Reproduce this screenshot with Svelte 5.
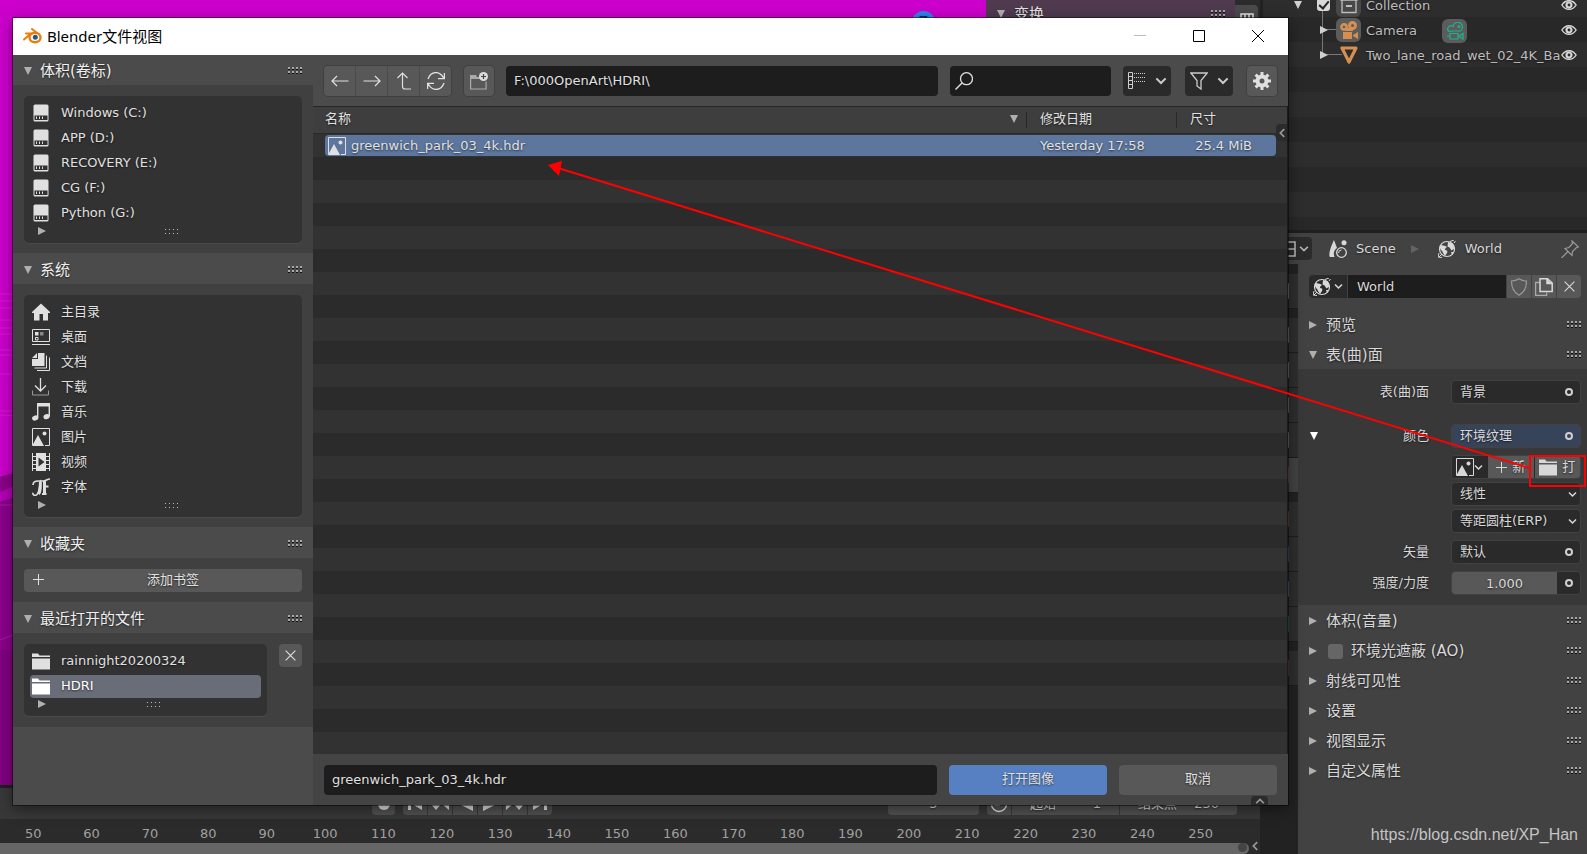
<script lang="ts">
	type Item = { icon: string; label: string };

	const drives: Item[] = [
		{ icon: 'drive', label: 'Windows (C:)' },
		{ icon: 'drive', label: 'APP (D:)' },
		{ icon: 'drive', label: 'RECOVERY (E:)' },
		{ icon: 'drive', label: 'CG (F:)' },
		{ icon: 'drive', label: 'Python (G:)' }
	];

	const system: Item[] = [
		{ icon: 'home', label: '主目录' },
		{ icon: 'desktop', label: '桌面' },
		{ icon: 'docs', label: '文档' },
		{ icon: 'download', label: '下载' },
		{ icon: 'music', label: '音乐' },
		{ icon: 'image', label: '图片' },
		{ icon: 'video', label: '视频' },
		{ icon: 'font', label: '字体' }
	];

	const recent: Item[] = [
		{ icon: 'folder', label: 'rainnight20200324' },
		{ icon: 'folder', label: 'HDRI' }
	];

	const files = [{ name: 'greenwich_park_03_4k.hdr', date: 'Yesterday 17:58', size: '25.4 MiB' }];

	const frames = Array.from({ length: 21 }, (_, i) => 50 + i * 10);

	const tabs = [
		{ color: '#b5b5b5', gap: false },
		{ color: '#b5b5b5', gap: true },
		{ color: '#b5b5b5', gap: false },
		{ color: '#b5b5b5', gap: false },
		{ color: '#b5b5b5', gap: false },
		{ color: '#c9606c', gap: false },
		{ color: '#a87548', gap: true },
		{ color: '#5480b5', gap: false },
		{ color: '#5c94d6', gap: false },
		{ color: '#1fa57f', gap: false },
		{ color: '#a85a62', gap: true }
	];

	let selectedRecent = $state('HDRI');
	let fileName = $state('greenwich_park_03_4k.hdr');
	let path = $state('F:\\000OpenArt\\HDRI\\');
	let search = $state('');
	let worldName = $state('World');
	let strength = $state('1.000');

	// every icon is drawn on an 18x18 grid
	const icons: Record<string, string> = {
		drive:
			'<path fill="currentColor" fill-rule="evenodd" d="M3 .5h12a1.5 1.5 0 0 1 1.500 1.500v14a1.500 1.500 0 0 1-1.500 1.500h-12a1.500 1.500 0 0 1-1.500-1.500v-14a1.500 1.500 0 0 1 1.500-1.500zM2.500 11.500v4.500h13v-4.500z"/><path stroke="currentColor" d="M4.500 12.500v2.500M7.500 12.500v2.500M10.500 12.500v2.500"/>',
		home: '<path fill="currentColor" d="M9 .5 18 9v1h-2v7.500h-5V11H7.500v6.500H2V10H0V9z"/>',
		desktop:
			'<path fill="none" stroke="currentColor" d="M.5 1.500h17v12H.5zM0 16.500h18"/><path fill="currentColor" d="M3 4h3.500v3.500H3z"/><path fill="#888" d="M8 4h3.500v3.500H8z"/><path fill="none" stroke="currentColor" d="M3.500 9.500h2.500v2.500H3.500z"/>',
		docs: '<path fill="currentColor" d="M6 0h6.500v13H0V6h6zM5 0v5H0z"/><path fill="none" stroke="currentColor" d="M14.500 2.500v12.500H2.500M17.500 4.500v13H5"/>',
		download:
			'<path fill="none" stroke="currentColor" stroke-width="1.300" d="M8.500 0v13M3 7.500 8.500 13 14 7.500"/><path fill="none" stroke="#999" d="M.5 12.500v4.500h16v-4.500"/>',
		music:
			'<path fill="currentColor" d="M5 0h13v3.500H5z"/><path fill="none" stroke="currentColor" stroke-width="1.400" d="M5.700 1v13.500M17.300 1v12"/><ellipse fill="currentColor" cx="3.200" cy="15" rx="3.200" ry="2.500" transform="rotate(-20 3.200 15)"/><ellipse fill="currentColor" cx="14.600" cy="13.600" rx="3.200" ry="2.500" transform="rotate(-20 14.600 13.600)"/>',
		image:
			'<path fill="none" stroke="currentColor" d="M.5 17V.5h17v17H13"/><path fill="currentColor" d="M0 18 6 7l6 11z"/><circle fill="currentColor" cx="12.500" cy="5.500" r="2"/>',
		video:
			'<path fill="currentColor" fill-rule="evenodd" d="M4 0h10v18H4zM6.500 4.500v9l6-4.500z"/><path fill="none" stroke="currentColor" d="M.5 0v18M17.500 0v18M0 3.500h4M0 7.500h4M0 11.500h4M0 15.500h4M14 3.500h4M14 7.500h4M14 11.500h4M14 15.500h4"/>',
		font: '<path fill="none" stroke="currentColor" stroke-width="1.600" d="M1 7c0-3 2-4 5-4h5c3 0 4-2 7-2M9 2c-2 4-1 14-5 15.200-2 .5-3.500-.5-3-2.500"/><path fill="none" stroke="currentColor" stroke-width="3" d="M8.500 4c-.5 5 .5 9-2 12M12.500 3v13"/><path fill="none" stroke="currentColor" stroke-width="2" d="M12 8.500h4.500M10 16h4.500"/>',
		folder: '<path fill="currentColor" d="M0 1.500h6l1.500 2H18V5H0zM0 6.500h18v11H0z"/>',
		back: '<path fill="none" stroke="currentColor" stroke-width="1.200" d="M17.500 9H1M6 4 1 9l5 5"/>',
		forward: '<path fill="none" stroke="currentColor" stroke-width="1.200" d="M.5 9H17M12 4l5 5-5 5"/>',
		parent:
			'<path fill="none" stroke="currentColor" stroke-width="1.200" d="M2.500 6 7.500 1l5 5M7.500 1v13.500q0 2.500 2.500 2.500h6"/>',
		refresh:
			'<path fill="none" stroke="currentColor" stroke-width="1.300" d="M1 7C4-1.500 13-1.500 17 6.500M17.400 1v5.600H11M17 11C14 19.500 5 19.500 1 11.500M.6 17v-5.600H7"/>',
		newfolder:
			'<path fill="none" stroke="#aaa" stroke-width="1.200" d="M.6 5v12h15.500V9.500"/><path fill="#aaa" d="M0 3h6l1 2h4v2H0z"/><circle fill="#ddd" cx="13.500" cy="4.500" r="4.500"/><path stroke="#444" stroke-width="1.200" d="M13.500 2v5M11 4.500h5"/>',
		search:
			'<circle fill="none" stroke="currentColor" stroke-width="1.300" cx="11.500" cy="6.700" r="6"/><path fill="none" stroke="currentColor" stroke-width="1.400" d="M7 11 .5 17.500"/>',
		display:
			'<path fill="none" stroke="currentColor" d="M.5 .5h4v16H.5zM.5 4.500h4M.5 8.500h4M.5 12.500h4"/><path fill="none" stroke="currentColor" stroke-dasharray="1 1" d="M6 1.500h12M6 5.500h12M6 9.500h12"/>',
		filter: '<path fill="none" stroke="currentColor" stroke-width="1.300" d="M.8 1h16.400L11 8.500V17l-4-3V8.500z"/>',
		gear: '<circle fill="none" stroke="currentColor" stroke-width="4" cx="9" cy="9" r="4.500"/><path stroke="currentColor" stroke-width="3" d="M9 0v4M9 14v4M0 9h4M14 9h4M2.600 2.600l3 3M12.400 12.400l3 3M15.400 2.600l-3 3M2.600 15.400l3-3"/>',
		chevron: '<path fill="none" stroke="currentColor" stroke-width="3" d="m2 5 7 7 7-7"/>',
		plus: '<path fill="none" stroke="currentColor" stroke-width="1.700" d="M9 0v18M0 9h18"/>',
		close: '<path fill="none" stroke="currentColor" stroke-width="1.800" d="m1 1 16 16M17 1 1 17"/>',
		eye: '<path fill="none" stroke="currentColor" stroke-width="1.600" d="M1 9c4-6.500 12-6.500 16 0-4 6.500-12 6.500-16 0z"/><circle fill="none" stroke="currentColor" stroke-width="2.400" cx="9" cy="9" r="2.800"/>',
		camera:
			'<g fill="none" stroke="currentColor"><circle cx="4" cy="6" r="2.600" stroke-width="2.600"/><circle cx="12.500" cy="4.500" r="3" stroke-width="3"/></g><path fill="currentColor" d="M3 11h9v7H3zM13 14l5-3v7l-5-3zM6 7h7v3H6z"/>',
		cameradata:
			'<g fill="none" stroke="currentColor" stroke-width="1.200"><path d="M3 9.500a3 3 0 1 1 4-5 4.800 4.800 0 1 1 7.500 4.500h-8z"/><path d="M4 11.500h8v5.500H4zM13 14.300l4-2.800v5.500zM4 14H1"/><circle cx="13" cy="4.500" r="1"/></g>',
		mesh: '<path fill="none" stroke="currentColor" stroke-width="3.200" stroke-linejoin="round" d="M2 2h14L9 16z"/>',
		collection:
			'<path fill="none" stroke="currentColor" stroke-width="1.300" d="M1 0h16v4H1zM2 4v12.500h14V4"/><path fill="currentColor" d="M6 9h6v2H6z"/>',
		scene:
			'<path fill="currentColor" d="M5 0 8 8c-3 2-4 5-2.500 9H1c-2-2 1-11 4-17z"/><circle fill="currentColor" cx="15" cy="2.800" r="2.500"/><circle fill="none" stroke="currentColor" stroke-width="1.300" cx="12.500" cy="12.500" r="4.800"/><path fill="none" stroke="currentColor" d="M9.500 13a3 3 0 0 1 3-3"/>',
		world:
			'<circle fill="none" stroke="currentColor" stroke-width="1.200" cx="9" cy="9" r="7.500"/><path fill="currentColor" d="M2 5c3 0 6 1 7 2-1 1-2 1-2 3 2 0 3 1 2 3l-2 3-2-3c0-2-3-3-3-5zM10 2l5 1.500 1.500 5-3 2-2-3-2-1zM13 12h3l-2 3z"/><path fill="none" stroke="currentColor" d="M12 1.500 16 0M1 13l-1 4 4 .5M16 3l1.500-2M1 17l3-3"/>',
		pin: '<path fill="none" stroke="currentColor" stroke-width="1.200" d="m11 1 6.500 6-2 .5-4 4-.5 4-7-7 4-1 3.500-4zM7 11.500.5 18"/>',
		shield: '<path fill="none" stroke="currentColor" stroke-width="1.200" d="M9 .8c2.500 1.700 5 2.200 7.500 2.200 0 6-1.500 11-7.500 14.200C3 14 1.500 9 1.500 3 4 3 6.500 2.500 9 .8z"/>',
		copy: '<path fill="none" stroke="#aaa" stroke-width="1.300" d="M4.500 4.500H.6v13h11v-3"/><path fill="none" stroke="currentColor" stroke-width="1.500" d="M5 .8h7.500L17.200 5v8.500H5zM12 1v4.500h5"/><path fill="currentColor" d="M12 1v5h5z"/>',
		clock: '<circle fill="none" stroke="currentColor" stroke-width="1.600" cx="9" cy="9" r="7.500"/><path fill="none" stroke="currentColor" stroke-width="1.500" d="M9 3v7H4.500"/>',
		record: '<circle fill="currentColor" cx="9" cy="9" r="6"/>',
		first: '<path fill="currentColor" d="M2 3h3v12H2zM16 3v12L6 9z"/>',
		prevkey: '<path fill="currentColor" d="m5 3 5 6-5 6-5-6zM18 3v12l-7-6z"/>',
		reverse: '<path fill="currentColor" d="M17 1v15L2 8.500z"/>',
		play: '<path fill="currentColor" d="M2 1v15l15-7.500z"/>',
		nextkey: '<path fill="currentColor" d="m13 3 5 6-5 6-5-6zM0 3v12l7-6z"/>',
		last: '<path fill="currentColor" d="M13 3h3v12h-3zM2 3v12l10-6z"/>',
		grid: '<path fill="none" stroke="currentColor" stroke-width="1.500" d="M3 18V9h12v9M7 9v9M11 9v9"/>',
		tab: '<path fill="none" stroke="currentColor" stroke-width="1.600" d="M1 2h15v14H1zM1 9h15"/>'
	};

	const playback = ['first', 'prevkey', 'reverse', 'play', 'nextkey', 'last'];
	const lower = ['射线可见性', '设置', '视图显示', '自定义属性'];
</script>

{#snippet icon(name: string, size = 18)}
	<svg class="icon" width={size} height={size} viewBox="0 0 18 18" aria-hidden="true">
		{@html icons[name]}
	</svg>
{/snippet}

{#snippet triangle(open: boolean)}
	<svg class="icon tri" width="8" height="8" viewBox="0 0 8 8" aria-hidden="true">
		<path fill="currentColor" d={open ? 'M0 0h8L4 8z' : 'M0 0v8l8-4z'} />
	</svg>
{/snippet}

{#snippet grip()}
	<svg class="icon" width="14" height="8" viewBox="0 0 14 8" aria-hidden="true">
		{#each [0, 4, 8, 12] as x}
			<path fill="#a8a8a8" d="M{x} 0h2v2h-2zM{x} 4h2v2h-2z" />
			<path fill="#111" d="M{x} 2h2v1h-2zM{x} 6h2v1h-2z" />
		{/each}
	</svg>
{/snippet}

{#snippet listFoot()}
	<div class="list-foot">
		{@render triangle(false)}
		<svg class="icon" width="13" height="6" viewBox="0 0 13 6" aria-hidden="true">
			<path
				fill="#bbb"
				d="M0 0h1v1h-1zM4 0h1v1h-1zM8 0h1v1h-1zM12 0h1v1h-1zM0 4h1v1h-1zM4 4h1v1h-1zM8 4h1v1h-1zM12 4h1v1h-1z"
			/>
		</svg>
	</div>
{/snippet}

{#snippet placeList(items: Item[])}
	<div class="list">
		{#each items as item}
			<button class="place">{@render icon(item.icon)}{item.label}</button>
		{/each}
		{@render listFoot()}
	</div>
{/snippet}

{#snippet panelHead(title: string, open: boolean)}
	<button class="panel-head">
		{@render triangle(open)}
		<span>{title}</span>
		{@render grip()}
	</button>
{/snippet}

<div class="screen">
	<div class="left-editors">
		<div class="viewport">
			<svg class="streaks" width="40" height="785" viewBox="0 0 40 785" aria-hidden="true">
				<path fill="#8b008b" d="M0 476 40 464v321H0z" />
				<path fill="#b500b5" d="M0 492 40 476v12L0 502z" />
				<path fill="#780078" fill-opacity=".5" d="M0 650h40v135H0z" />
				<path
					fill="none"
					stroke="#e25be2"
					stroke-opacity=".3"
					d="M0 294h40M0 301h40M0 308h40M0 320h40M0 328h40M0 334h40M0 350h40M0 355h40M0 374h40M0 411h40M0 415l40 2M0 476l40-9M0 505h40M0 640l40-16"
				/>
			</svg>
			<span class="gizmo">Z</span>
			<div class="transform">
				{@render triangle(true)}
				<span>变换</span>
				{@render grip()}
			</div>
			<div class="tools"><button aria-label="切换透视">{@render icon('grid')}</button></div>
		</div>
		<div class="timeline">
			<div class="playbar">
				<button class="btn record" aria-label="自动插帧">{@render icon('record')}</button>
				<div class="join">
					{#each playback as name}
						<button class="btn" aria-label={name}>{@render icon(name)}</button>
					{/each}
				</div>
				<div class="frame-num">5</div>
				<div class="join range">
					<button class="btn" aria-label="预览范围">{@render icon('clock')}</button>
					<div class="btn start"><span>起始</span><span>1</span></div>
					<div class="btn end"><span>结束点</span><span>250</span></div>
				</div>
			</div>
			<div class="ruler">
				{#each frames as frame}
					<span>{frame}</span>
				{/each}
			</div>
			<div class="scrollbar"><i></i></div>
			<span class="flap flap-timeline">{@render icon('chevron', 10)}</span>
		</div>
	</div>

	<div class="right-editors">
		<div class="outliner">
			<svg class="tree" width="30" height="55" viewBox="0 0 30 55" aria-hidden="true">
				<path fill="none" stroke="#777" d="M.5 0v54.500H20M0 29.500h14" />
			</svg>
			<div class="row">
				<span class="expand">{@render triangle(true)}</span>
				<input type="checkbox" checked aria-label="Collection" />
				<span class="badge">{@render icon('collection')}</span>
				<span class="name">Collection</span>
				{@render icon('eye', 16)}
			</div>
			<div class="row child">
				<span class="expand">{@render triangle(false)}</span>
				<span class="badge orange">{@render icon('camera')}</span>
				<span class="name">Camera <span class="badge green">{@render icon('cameradata')}</span></span>
				{@render icon('eye', 16)}
			</div>
			<div class="row child">
				<span class="expand">{@render triangle(false)}</span>
				<span class="badge orange plain">{@render icon('mesh')}</span>
				<span class="name">Two_lane_road_wet_02_4K_Ba</span>
				{@render icon('eye', 16)}
			</div>
		</div>

		<div class="properties">
			<div class="crumbs">
				<button class="editor-type" aria-label="编辑器类型">
					{@render icon('tab')}{@render icon('chevron', 10)}
				</button>
				{@render icon('scene')}
				<span>Scene</span>
				<span class="sep">{@render triangle(false)}</span>
				{@render icon('world')}
				<span>World</span>
				<span class="pin">{@render icon('pin')}</span>
			</div>
			<div class="props-main">
				<div class="tabs">
					{#each tabs as tab, i}
						<button
							class:gap={tab.gap}
							class:active={i === 5}
							style="color: {tab.color}"
							aria-label="属性页 {i + 1}"
						>
							{@render icon('tab')}
						</button>
					{/each}
				</div>
				<div class="props">
					<div class="datablock">
						<button class="dark world-pick" aria-label="浏览世界">
							{@render icon('world')}{@render icon('chevron', 9)}
						</button>
						<input type="text" aria-label="世界名称" bind:value={worldName} />
						<button class="btn dim" aria-label="伪用户">{@render icon('shield')}</button>
						<button class="btn" aria-label="复制">{@render icon('copy')}</button>
						<button class="btn" aria-label="断开">{@render icon('close', 11)}</button>
					</div>
					{@render panelHead('预览', false)}
					{@render panelHead('表(曲)面', true)}
					<div class="surface">
						<div class="prop">
							<span class="label">表(曲)面</span>
							<button class="field">背景<i class="socket"></i></button>
						</div>
						<div class="prop wide">
							<span class="open">{@render triangle(true)}</span>
							<span class="label">颜色</span>
							<button class="field blue">环境纹理<i class="socket"></i></button>
						</div>
						<div class="prop">
							<div class="field split">
								<button class="dark" aria-label="浏览图像">
									{@render icon('image')}{@render icon('chevron', 9)}
								</button>
								<button class="btn">{@render icon('plus', 11)}新</button>
								<button class="btn">{@render icon('folder')}打</button>
							</div>
						</div>
						<div class="prop tight">
							<div class="field pick">
								<select aria-label="插值"><option>线性</option></select>
								{@render icon('chevron', 9)}
							</div>
						</div>
						<div class="prop tight">
							<div class="field pick">
								<select aria-label="投影"><option>等距圆柱(ERP)</option></select>
								{@render icon('chevron', 9)}
							</div>
						</div>
						<div class="prop">
							<span class="label">矢量</span>
							<button class="field">默认<i class="socket"></i></button>
						</div>
						<div class="prop">
							<label class="label" for="strength">强度/力度</label>
							<div class="field number">
								<input id="strength" type="text" bind:value={strength} />
								<i class="socket"></i>
							</div>
						</div>
					</div>
					{@render panelHead('体积(音量)', false)}
					<div class="panel-head">
						{@render triangle(false)}
						<label><input type="checkbox" /> 环境光遮蔽 (AO)</label>
						{@render grip()}
					</div>
					{#each lower as title}
						{@render panelHead(title, false)}
					{/each}
				</div>
			</div>
		</div>
	</div>

	<div class="dialog" role="dialog" aria-labelledby="dialog-title">
		<div class="titlebar">
			<svg width="19" height="16" viewBox="0 0 19 16" aria-hidden="true">
				<path
					fill="none"
					stroke="#e87d0d"
					stroke-width="2"
					stroke-linecap="round"
					stroke-linejoin="round"
					d="M9 1l5 4M3 5.500h7M1 11.500l7-6"
				/>
				<ellipse fill="#fff" stroke="#e87d0d" stroke-width="2.400" cx="12" cy="9.500" rx="5.500" ry="4.800" />
				<circle fill="#265787" cx="12.300" cy="9.200" r="2.500" />
			</svg>
			<span id="dialog-title">Blender文件视图</span>
			<button aria-label="最小化">
				<svg width="12" height="12" viewBox="0 0 12 12"><path stroke="#bbb" d="M0 5.500h12" /></svg>
			</button>
			<button aria-label="最大化">
				<svg width="12" height="12" viewBox="0 0 12 12">
					<path fill="none" stroke="#000" d="M.5 .5h11v11H.5z" />
				</svg>
			</button>
			<button aria-label="关闭">
				<svg width="12" height="12" viewBox="0 0 12 12">
					<path stroke="#000" d="m0 0 12 12M12 0 0 12" />
				</svg>
			</button>
		</div>

		<div class="dialog-body">
			<aside>
				<section>
					{@render panelHead('体积(卷标)', true)}
					<div class="panel-body">{@render placeList(drives)}</div>
				</section>
				<section>
					{@render panelHead('系统', true)}
					<div class="panel-body">{@render placeList(system)}</div>
				</section>
				<section>
					{@render panelHead('收藏夹', true)}
					<div class="panel-body">
						<button class="btn bookmark">{@render icon('plus', 11)}<span>添加书签</span></button>
					</div>
				</section>
				<section>
					{@render panelHead('最近打开的文件', true)}
					<div class="panel-body recent">
						<div class="list">
							{#each recent as item}
								<button
									class="place"
									class:selected={selectedRecent === item.label}
									onclick={() => (selectedRecent = item.label)}
								>
									{@render icon(item.icon)}{item.label}
								</button>
							{/each}
							{@render listFoot()}
						</div>
						<button class="btn clear" aria-label="清除">{@render icon('close', 11)}</button>
					</div>
				</section>
			</aside>

			<div class="browser">
				<div class="toolbar">
					<div class="join nav">
						<button class="btn" aria-label="后退">{@render icon('back')}</button>
						<button class="btn" aria-label="前进">{@render icon('forward')}</button>
						<button class="btn" aria-label="上级目录">{@render icon('parent')}</button>
						<button class="btn" aria-label="刷新">{@render icon('refresh')}</button>
					</div>
					<button class="btn square" aria-label="新建文件夹">{@render icon('newfolder')}</button>
					<input class="path" type="text" aria-label="路径" bind:value={path} />
					<label class="search">
						{@render icon('search')}
						<input type="text" aria-label="搜索" bind:value={search} />
					</label>
					<button class="dark menu" aria-label="显示模式">
						{@render icon('display')}{@render icon('chevron', 12)}
					</button>
					<button class="dark menu" aria-label="过滤">
						{@render icon('filter')}{@render icon('chevron', 12)}
					</button>
					<button class="btn square" aria-label="设置">{@render icon('gear')}</button>
				</div>

				<div class="files">
					<table>
						<colgroup><col /><col class="c-date" /><col class="c-size" /></colgroup>
						<thead>
							<tr>
								<th><div class="sorted">名称{@render triangle(true)}</div></th>
								<th><div>修改日期</div></th>
								<th><div>尺寸</div></th>
							</tr>
						</thead>
						<tbody>
							{#each files as file}
								<tr>
									<td><div>{@render icon('image')}{file.name}</div></td>
									<td><div>{file.date}</div></td>
									<td><div>{file.size}</div></td>
								</tr>
							{/each}
						</tbody>
					</table>
					<span class="flap flap-side">{@render icon('chevron', 10)}</span>
				</div>

				<div class="actions">
					<input type="text" aria-label="文件名" bind:value={fileName} />
					<button class="btn primary">打开图像</button>
					<button class="btn">取消</button>
					<span class="flap flap-bottom">{@render icon('chevron', 10)}</span>
				</div>
			</div>
		</div>
	</div>

	<svg class="annotation" viewBox="0 0 1587 854" preserveAspectRatio="none" aria-hidden="true">
		<path fill="none" stroke="#f00" stroke-width="2" d="M1529 468 558 168M1530 456h55v30h-55z" />
		<path fill="#f00" d="m548 165 14-4-3 15z" />
	</svg>
	<a class="watermark" href="https://blog.csdn.net/XP_Han">https://blog.csdn.net/XP_Han</a>
</div>

<style>
	:global(body) {
		margin: 0;
		background: #222;
	}

	.screen {
		position: relative;
		display: flex;
		min-height: 100vh;
		overflow: hidden;
		background: #222;
		color: #e0e0e0;
		font: 13px/20px 'DejaVu Sans', 'Noto Sans CJK SC', sans-serif;
		text-shadow: 0 1px 2px rgba(0, 0, 0, 0.6);
	}

	.screen * {
		box-sizing: border-box;
	}

	button,
	input,
	select {
		margin: 0;
		padding: 0;
		border: 0;
		background: none;
		color: inherit;
		font: inherit;
		text-shadow: inherit;
	}

	.icon {
		display: block;
		flex: none;
	}

	.tri {
		color: #b0b0b0;
	}

	.btn,
	.dark {
		display: flex;
		align-items: center;
		justify-content: center;
		background: #585858;
		border-radius: 4px;
	}

	.dark {
		background: #2a2a2a;
	}

	.join {
		display: flex;
		gap: 1px;
	}

	.join .btn {
		border-radius: 0;
	}

	.join .btn:first-child {
		border-radius: 4px 0 0 4px;
	}

	.join .btn:last-child {
		border-radius: 0 4px 4px 0;
	}

	/* background editors */
	.left-editors {
		display: flex;
		flex: 1;
		flex-direction: column;
		min-width: 0;
		border-right: 3px solid #222;
	}

	.viewport {
		position: relative;
		display: flex;
		flex: 1;
		justify-content: flex-end;
		background: linear-gradient(#cc00cc 60%, #7a007a);
	}

	.streaks {
		position: absolute;
		top: 0;
		left: 0;
	}

	.gizmo {
		position: absolute;
		top: 11px;
		right: 325px;
		width: 23px;
		height: 23px;
		border-radius: 50%;
		background: #2e83ea;
		color: #10284a;
		text-align: center;
	}

	.transform {
		display: flex;
		align-items: center;
		gap: 9px;
		width: 249px;
		height: 27px;
		padding: 0 10px 0 11px;
		background: #4f3a4f;
		font-size: 15px;
	}

	.transform span {
		flex: 1;
	}

	.tools {
		width: 25px;
		height: 40px;
		padding-top: 5px;
		background: #2b2b2b;
	}

	.tools button {
		display: flex;
		justify-content: center;
		width: 23px;
		height: 30px;
		border-radius: 0 4px 0 0;
		background: #4a4a4a;
	}

	.timeline {
		position: relative;
		border-top: 3px solid #202020;
		background: #2b2b2b;
	}

	.playbar {
		display: flex;
		align-items: center;
		height: 31px;
		padding: 0 23px 0 372px;
		background: #383838;
	}

	.playbar .btn {
		width: 24px;
		height: 23px;
		background: #525252;
	}

	.playbar .record {
		width: 23px;
		margin-right: 8px;
		border-radius: 4px;
	}

	.frame-num {
		width: 91px;
		height: 23px;
		margin-left: auto;
		border-radius: 4px;
		background: #525252;
		line-height: 23px;
		text-align: center;
	}

	.range {
		margin-left: 8px;
	}

	.playbar .start,
	.playbar .end {
		justify-content: space-between;
		width: 107px;
		padding: 0 18px;
	}

	.playbar .end {
		width: 117px;
	}

	.ruler {
		display: flex;
		height: 24px;
		padding: 5px 30px 0 4px;
		color: #a0a0a0;
		text-shadow: none;
	}

	.ruler span {
		flex: 1;
		text-align: center;
	}

	.scrollbar {
		height: 11px;
		margin-right: 11px;
		border-radius: 0 6px 6px 0;
		background: #666;
	}

	.scrollbar i {
		display: block;
		width: 9px;
		height: 9px;
		margin: 0 2px 0 auto;
		border-radius: 50%;
		background: #444;
	}

	.flap {
		position: absolute;
		display: flex;
		align-items: center;
		justify-content: center;
		width: 11px;
		height: 17px;
		border-radius: 4px 0 0 4px;
		background: #2b2b2b;
		color: #999;
	}

	.flap-timeline,
	.flap-side {
		right: 0;
	}

	.flap-timeline {
		bottom: 0;
	}

	.flap-timeline .icon,
	.flap-side .icon {
		transform: rotate(90deg);
	}

	.right-editors {
		display: flex;
		flex: none;
		flex-direction: column;
		width: 324px;
	}

	.outliner {
		position: relative;
		height: 230px;
		overflow: hidden;
		background: repeating-linear-gradient(#2d2d2d 0 25px, #282828 25px 50px) 0 -8px / 100% 300px;
		color: #bdbdbd;
	}

	.tree {
		position: absolute;
		top: 0;
		left: 59px;
	}

	.row {
		position: relative;
		display: flex;
		align-items: center;
		height: 25px;
		padding-right: 10px;
		padding-left: 31px;
	}

	.row:first-child,
	.tree + .row {
		margin-top: -8px;
	}

	.row .expand {
		width: 23px;
	}

	.row .tri {
		color: #d0d0d0;
	}

	.row.child {
		padding-left: 57px;
	}

	.row.child .expand {
		width: 16px;
	}

	.row > .icon {
		color: #d8d8d8;
	}

	input[type='checkbox'] {
		width: 15px;
		height: 15px;
		border-radius: 3px;
		background: #666;
		appearance: none;
	}

	.row input:checked {
		width: 13px;
		height: 13px;
		background: #d8d8d8;
	}

	.row input:checked::after {
		display: block;
		width: 4px;
		height: 8px;
		margin: 1px 0 0 4px;
		border: solid #222;
		border-width: 0 2px 2px 0;
		content: '';
		transform: rotate(40deg);
	}

	.row input + .badge {
		margin-left: 6px;
	}

	.badge {
		display: flex;
		align-items: center;
		justify-content: center;
		flex: none;
		width: 25px;
		height: 24px;
		border-radius: 6px;
		background: #484848;
	}

	.orange {
		background: #5c5c5c;
		color: #d68f52;
	}

	.plain {
		background: none;
	}

	.green {
		margin-left: 25px;
		background: #5c5c5c;
		color: #1bb58c;
	}

	.name {
		display: flex;
		align-items: center;
		flex: 1;
		min-width: 0;
		margin-left: 5px;
		padding-top: 2px;
		white-space: nowrap;
	}

	.properties {
		display: flex;
		flex: 1;
		flex-direction: column;
		border-top: 3px solid #1f1f1f;
		background: #424242;
		color: #d8d8d8;
	}

	.crumbs {
		display: flex;
		align-items: center;
		height: 31px;
		padding-right: 8px;
		background: #424242;
	}

	.crumbs span {
		margin: 0 9px;
	}

	.crumbs .sep {
		margin: 0 19px 0 6px;
		opacity: 0.3;
	}

	.crumbs .pin {
		margin: 0 0 0 auto;
		color: #999;
	}

	.editor-type {
		display: flex;
		align-items: center;
		gap: 2px;
		height: 23px;
		margin-right: 17px;
		padding: 0 3px 0 16px;
		border-radius: 4px;
		background: #2b2b2b;
		color: #b5b5b5;
	}

	.props-main {
		display: flex;
		flex: 1;
	}

	.tabs {
		flex: none;
		width: 35px;
		background: #222;
	}

	.tabs button {
		display: flex;
		align-items: center;
		justify-content: center;
		width: 100%;
		height: 35px;
		border-bottom: 1px solid #1c1c1c;
		background: #2e2e2e;
	}

	.tabs button:first-child {
		margin-top: 10px;
	}

	.tabs .gap {
		margin-top: 9px;
	}

	.tabs .active {
		background: #424242;
	}

	.props {
		flex: 1;
		min-width: 0;
		padding-top: 11px;
	}

	.datablock {
		display: flex;
		gap: 1px;
		height: 23px;
		margin: 0 6px 11px 11px;
		border-radius: 4px;
		overflow: hidden;
	}

	.datablock .btn,
	.datablock .dark {
		flex: none;
		width: 24px;
		border-radius: 0;
	}

	.datablock .dim {
		color: #999;
	}

	.datablock .world-pick {
		gap: 3px;
		width: 38px;
	}

	.datablock input {
		flex: 1;
		min-width: 0;
		padding: 0 9px;
		background: #1d1d1d;
	}

	.panel-head {
		display: flex;
		align-items: center;
		gap: 9px;
		width: 100%;
		height: 30px;
		padding: 2px 6px 0 11px;
		font-size: 15px;
		text-align: left;
	}

	.panel-head span,
	.panel-head label {
		flex: 1;
	}

	.panel-head label {
		display: flex;
		align-items: center;
		gap: 8px;
		padding-left: 2px;
	}

	.surface {
		display: flex;
		flex-direction: column;
		gap: 7px;
		padding: 11px 6px 10px 12px;
		background: #383838;
	}

	.prop {
		display: flex;
		align-items: center;
		justify-content: flex-end;
		gap: 22px;
		height: 24px;
	}

	.prop.wide {
		margin-top: 13px;
	}

	.prop.tight {
		margin-top: -4px;
	}

	.open {
		margin-right: auto;
	}

	.open .tri {
		color: #fff;
	}

	.field {
		display: flex;
		align-items: center;
		justify-content: space-between;
		width: 130px;
		height: 24px;
		padding: 0 7px 0 8px;
		border: 1px solid #424242;
		border-radius: 4px;
		background: #2a2a2a;
	}

	.field.blue {
		background: #374359;
	}

	.socket {
		width: 8px;
		height: 8px;
		border: 2px solid #cfcfcf;
		border-radius: 50%;
	}

	.split {
		gap: 1px;
		padding: 0;
		overflow: hidden;
	}

	.split button {
		flex: 1;
		gap: 5px;
		height: 100%;
		border-radius: 0;
	}

	.split .dark {
		flex: none;
		gap: 0;
		width: 35px;
	}

	.pick {
		position: relative;
		padding: 0;
	}

	.pick select {
		width: 100%;
		height: 100%;
		padding: 0 8px;
		appearance: none;
	}

	.pick .icon {
		position: absolute;
		right: 3px;
		pointer-events: none;
	}

	.field.number {
		padding-left: 0;
		overflow: hidden;
	}

	.number input {
		width: 105px;
		height: 100%;
		background: #585858;
		text-align: center;
	}

	/* file browser window */
	.dialog {
		position: absolute;
		top: 18px;
		right: 299px;
		bottom: 49px;
		left: 13px;
		display: flex;
		flex-direction: column;
		background: #444;
		box-shadow:
			0 0 0 1px rgba(0, 0, 0, 0.45),
			0 4px 14px rgba(0, 0, 0, 0.45);
	}

	.titlebar {
		display: flex;
		align-items: center;
		height: 37px;
		padding: 0 1px 2px 10px;
		background: #fff;
		color: #000;
		font: 15px/20px 'Noto Sans', 'Noto Sans CJK SC', sans-serif;
		text-shadow: none;
	}

	.titlebar span {
		flex: 1;
		margin-left: 5px;
	}

	.titlebar button {
		display: flex;
		align-items: center;
		justify-content: center;
		width: 59px;
		height: 100%;
	}

	.dialog-body {
		display: flex;
		flex: 1;
		min-height: 0;
	}

	aside {
		flex: none;
		width: 300px;
		background: #4b4b4b;
	}

	aside .panel-head {
		gap: 8px;
		height: 31px;
		padding: 2px 11px 0;
		background: #4b4b4b;
		color: #f0f0f0;
	}

	aside section:first-child .panel-head {
		height: 30px;
	}

	.panel-body {
		padding: 11px 11px 10px;
		background: #404040;
	}

	.list {
		padding: 5px 6px 0;
		border-radius: 5px;
		background: #323232;
		box-shadow: 0 1px 0 #4a4a4a;
	}

	.place {
		display: flex;
		align-items: center;
		gap: 11px;
		width: 100%;
		height: 25px;
		padding: 0 2px 2px;
		text-align: left;
	}

	.place.selected {
		height: 23px;
		margin: 1px 0;
		border-radius: 4px;
		background: #686d78;
		color: #fff;
	}

	.list-foot {
		display: flex;
		align-items: flex-start;
		height: 17px;
		padding: 1px 0 0 8px;
	}

	.list-foot .icon:last-child {
		margin: 2px auto 0;
	}

	.bookmark {
		width: 100%;
		height: 23px;
		padding: 0 0 2px 9px;
	}

	.bookmark span {
		flex: 1;
	}

	.recent {
		display: flex;
		align-items: flex-start;
		gap: 12px;
		padding-bottom: 11px;
	}

	.recent .list {
		flex: 1;
	}

	.clear {
		width: 23px;
		height: 23px;
	}

	.browser {
		display: flex;
		flex: 1;
		flex-direction: column;
		min-width: 0;
	}

	.toolbar {
		display: flex;
		align-items: center;
		gap: 12px;
		height: 51px;
		padding: 0 11px;
		background: #4b4b4b;
	}

	.toolbar .btn,
	.toolbar .dark {
		height: 30px;
	}

	.nav {
		margin-right: 1px;
	}

	.nav .btn {
		width: 31px;
	}

	.nav,
	.toolbar .square {
		border-radius: 4px;
		box-shadow: 0 0 0 1px #404040;
	}

	.toolbar .square {
		width: 30px;
	}

	.path,
	.search {
		height: 30px;
		border-radius: 4px;
		background: #1d1d1d;
	}

	.path {
		flex: 1;
		min-width: 0;
		padding: 0 8px;
	}

	.search {
		display: flex;
		align-items: center;
		width: 161px;
		padding: 0 5px;
	}

	.search input {
		flex: 1;
		min-width: 0;
	}

	.menu {
		gap: 9px;
		width: 48px;
		margin-right: 2px;
		color: #ccc;
	}

	.files {
		position: relative;
		flex: 1;
		border-right: 1px solid #1c1c1c;
		background: repeating-linear-gradient(#323232 0 23px, #2b2b2b 23px 46px) 0 28px;
	}

	table {
		width: 100%;
		border-collapse: collapse;
		table-layout: fixed;
	}

	.c-date {
		width: 150px;
	}

	.c-size {
		width: 111px;
	}

	th {
		height: 27px;
		padding: 0;
		border-top: 1px solid #262626;
		border-bottom: 1px solid #2a2a2a;
		background: #3e3e3e;
		font-weight: normal;
		text-align: left;
	}

	th div {
		display: flex;
		align-items: center;
		height: 16px;
		padding: 0 0 2px 13px;
		border-left: 1px solid #2a2a2a;
	}

	th .sorted {
		justify-content: space-between;
		padding: 0 8px 2px 12px;
		border: 0;
	}

	td {
		padding: 1px 0;
	}

	td div {
		display: flex;
		align-items: center;
		height: 21px;
		padding-left: 14px;
		background: #5d769e;
	}

	td:first-child {
		padding-left: 12px;
	}

	td:first-child div {
		gap: 5px;
		padding-left: 3px;
		border-radius: 4px 0 0 4px;
	}

	td:last-child {
		padding-right: 11px;
	}

	td:last-child div {
		justify-content: flex-end;
		padding-right: 24px;
		border-radius: 0 4px 4px 0;
	}

	.flap-side {
		top: 18px;
	}

	.actions {
		position: relative;
		display: flex;
		gap: 12px;
		height: 51px;
		padding: 11px;
		background: #444;
	}

	.actions input {
		flex: 1;
		min-width: 0;
		height: 30px;
		padding: 0 8px 2px;
		border-radius: 4px;
		background: #1d1d1d;
	}

	.actions .btn {
		width: 158px;
		height: 30px;
		padding-bottom: 2px;
	}

	.actions .primary {
		background: #5680c2;
	}

	.flap-bottom {
		right: 20px;
		bottom: 0;
		width: 17px;
		height: 9px;
		border-radius: 4px 4px 0 0;
	}

	.flap-bottom .icon {
		transform: rotate(180deg);
	}

	.annotation {
		position: absolute;
		inset: 0;
		width: 100%;
		height: 100%;
		pointer-events: none;
	}

	.watermark {
		position: absolute;
		right: 9px;
		bottom: 9px;
		color: #c4c4c4;
		font: 16px/20px 'Liberation Sans', Arial, sans-serif;
		text-decoration: none;
		text-shadow: none;
	}
</style>
